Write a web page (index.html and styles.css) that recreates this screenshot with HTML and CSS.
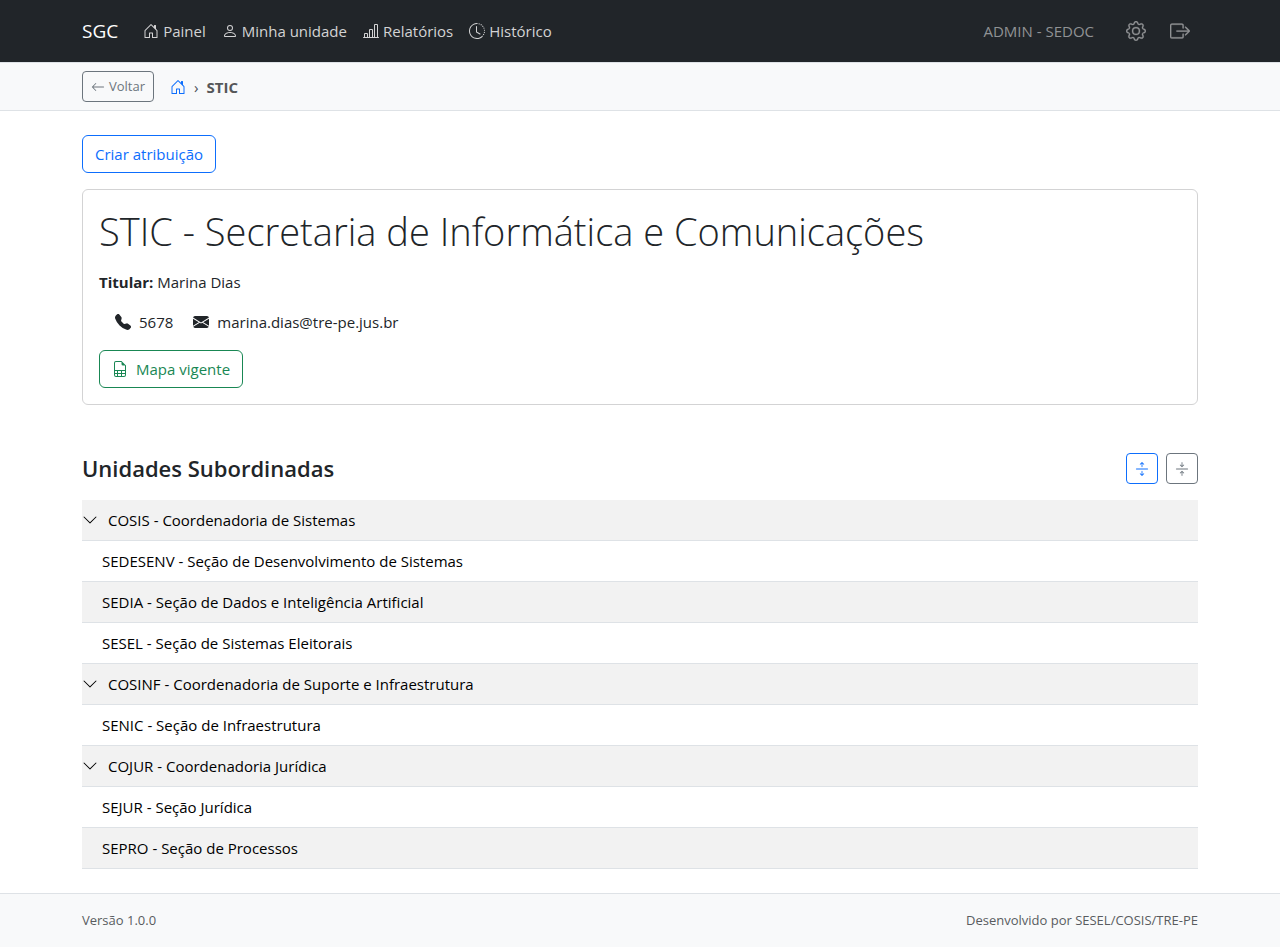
FILE: index.html
```html
<!DOCTYPE html>
<html lang="pt-BR">
<head>
<meta charset="utf-8">
<meta name="viewport" content="width=device-width, initial-scale=1">
<title>SGC - STIC</title>
<link rel="stylesheet" href="styles.css">
</head>
<body>
<svg class="sprite" aria-hidden="true">
  <symbol id="house" viewBox="0 0 16 16"><path d="M8.354 1.146a.5.5 0 0 0-.708 0l-6 6A.5.5 0 0 0 1.5 7.5v7a.5.5 0 0 0 .5.5h4.5a.5.5 0 0 0 .5-.5v-4h2v4a.5.5 0 0 0 .5.5H14a.5.5 0 0 0 .5-.5v-7a.5.5 0 0 0-.146-.354L13 5.793V2.5a.5.5 0 0 0-.5-.5h-1a.5.5 0 0 0-.5.5v1.293zM2.5 14V7.707l5.5-5.5 5.5 5.5V14H10v-4a.5.5 0 0 0-.5-.5h-3a.5.5 0 0 0-.5.5v4z"/></symbol>
  <symbol id="person" viewBox="0 0 16 16"><path d="M8 8a3 3 0 1 0 0-6 3 3 0 0 0 0 6m2-3a2 2 0 1 1-4 0 2 2 0 0 1 4 0m4 8c0 1-1 1-1 1H3s-1 0-1-1 1-4 6-4 6 3 6 4m-1-.004c-.001-.246-.154-.986-.832-1.664C11.516 10.68 10.289 10 8 10s-3.516.68-4.168 1.332c-.678.678-.83 1.418-.832 1.664z"/></symbol>
  <symbol id="chart" viewBox="0 0 16 16"><path d="M11 2a1 1 0 0 1 1-1h2a1 1 0 0 1 1 1v12h.5a.5.5 0 0 1 0 1H.5a.5.5 0 0 1 0-1H1v-3a1 1 0 0 1 1-1h2a1 1 0 0 1 1 1v3h1V7a1 1 0 0 1 1-1h2a1 1 0 0 1 1 1v7h1zm1 12h2V2h-2zm-3 0V7H7v7zm-5 0v-3H2v3z"/></symbol>
  <symbol id="history" viewBox="0 0 16 16"><path d="M8.515 1.019A7 7 0 0 0 8 1V0a8 8 0 0 1 .589.022zm2.004.45a7 7 0 0 0-.985-.299l.219-.976q.576.129 1.126.342zm1.37.71a7 7 0 0 0-.439-.27l.493-.87a8 8 0 0 1 .979.654l-.615.789a7 7 0 0 0-.418-.302zm1.834 1.79a7 7 0 0 0-.653-.796l.724-.69q.406.429.747.91zm.744 1.352a7 7 0 0 0-.214-.468l.893-.45a8 8 0 0 1 .45 1.088l-.95.313a7 7 0 0 0-.179-.483m.53 2.507a7 7 0 0 0-.1-1.025l.985-.17q.1.58.116 1.17zm-.131 1.538q.05-.254.081-.51l.993.123a8 8 0 0 1-.23 1.155l-.964-.267q.069-.247.12-.501m-.952 2.379q.276-.436.486-.908l.914.405q-.24.54-.555 1.038zm-.964 1.205q.183-.183.35-.378l.758.653a8 8 0 0 1-.401.432z"/><path d="M8 1a7 7 0 1 0 4.95 11.95l.707.707A8.001 8.001 0 1 1 8 0z"/><path d="M7.5 3a.5.5 0 0 1 .5.5v5.21l3.248 1.856a.5.5 0 0 1-.496.868l-3.5-2A.5.5 0 0 1 7 9V3.5a.5.5 0 0 1 .5-.5"/></symbol>
  <symbol id="gear" viewBox="0 0 16 16"><path d="M8 4.754a3.246 3.246 0 1 0 0 6.492 3.246 3.246 0 0 0 0-6.492M5.754 8a2.246 2.246 0 1 1 4.492 0 2.246 2.246 0 0 1-4.492 0"/><path d="M9.796 1.343c-.527-1.79-3.065-1.79-3.592 0l-.094.319a.873.873 0 0 1-1.255.52l-.292-.16c-1.64-.892-3.433.902-2.54 2.541l.159.292a.873.873 0 0 1-.52 1.255l-.319.094c-1.79.527-1.79 3.065 0 3.592l.319.094a.873.873 0 0 1 .52 1.255l-.16.292c-.892 1.64.901 3.434 2.541 2.54l.292-.159a.873.873 0 0 1 1.255.52l.094.319c.527 1.79 3.065 1.79 3.592 0l.094-.319a.873.873 0 0 1 1.255-.52l.292.16c1.64.893 3.434-.902 2.54-2.541l-.159-.292a.873.873 0 0 1 .52-1.255l.319-.094c1.79-.527 1.79-3.065 0-3.592l-.319-.094a.873.873 0 0 1-.52-1.255l.16-.292c.893-1.64-.902-3.433-2.541-2.54l-.292.159a.873.873 0 0 1-1.255-.52zm-2.633.283c.246-.835 1.428-.835 1.674 0l.094.319a1.873 1.873 0 0 0 2.693 1.115l.291-.16c.764-.415 1.6.42 1.184 1.185l-.159.292a1.873 1.873 0 0 0 1.116 2.692l.318.094c.835.246.835 1.428 0 1.674l-.319.094a1.873 1.873 0 0 0-1.115 2.693l.16.291c.415.764-.42 1.6-1.185 1.184l-.291-.159a1.873 1.873 0 0 0-2.693 1.116l-.094.318c-.246.835-1.428.835-1.674 0l-.094-.319a1.873 1.873 0 0 0-2.692-1.115l-.292.16c-.764.415-1.6-.42-1.184-1.185l.159-.291A1.873 1.873 0 0 0 1.945 8.93l-.319-.094c-.835-.246-.835-1.428 0-1.674l.319-.094A1.873 1.873 0 0 0 3.06 4.377l-.16-.292c-.415-.764.42-1.6 1.185-1.184l.292.159a1.873 1.873 0 0 0 2.692-1.115z"/></symbol>
  <symbol id="exit" viewBox="0 0 16 16"><path fill-rule="evenodd" d="M10 12.5a.5.5 0 0 1-.5.5h-8a.5.5 0 0 1-.5-.5v-9a.5.5 0 0 1 .5-.5h8a.5.5 0 0 1 .5.5v2a.5.5 0 0 0 1 0v-2A1.5 1.5 0 0 0 9.5 2h-8A1.5 1.5 0 0 0 0 3.5v9A1.5 1.5 0 0 0 1.5 14h8a1.5 1.5 0 0 0 1.5-1.5v-2a.5.5 0 0 0-1 0z"/><path fill-rule="evenodd" d="M15.854 8.354a.5.5 0 0 0 0-.708l-3-3a.5.5 0 0 0-.708.708L14.293 7.5H5.5a.5.5 0 0 0 0 1h8.793l-2.147 2.146a.5.5 0 0 0 .708.708z"/></symbol>
  <symbol id="back" viewBox="0 0 16 16"><path fill-rule="evenodd" d="M15 8a.5.5 0 0 0-.5-.5H2.707l3.147-3.146a.5.5 0 1 0-.708-.708l-4 4a.5.5 0 0 0 0 .708l4 4a.5.5 0 0 0 .708-.708L2.707 8.5H14.5A.5.5 0 0 0 15 8"/></symbol>
  <symbol id="phone" viewBox="0 0 16 16"><path fill-rule="evenodd" d="M1.885.511a1.745 1.745 0 0 1 2.61.163L6.29 2.98c.329.423.445.974.315 1.494l-.547 2.19a.68.68 0 0 0 .178.643l2.457 2.457a.68.68 0 0 0 .644.178l2.189-.547a1.75 1.75 0 0 1 1.494.315l2.306 1.794c.829.645.905 1.87.163 2.611l-1.034 1.034c-.74.74-1.846 1.065-2.877.702a18.6 18.6 0 0 1-7.01-4.42 18.6 18.6 0 0 1-4.42-7.009c-.362-1.03-.037-2.137.703-2.877z"/></symbol>
  <symbol id="mail" viewBox="0 0 16 16"><path d="M.05 3.555A2 2 0 0 1 2 2h12a2 2 0 0 1 1.95 1.555L8 8.414zM0 4.697v7.104l5.803-3.558zM6.761 8.83l-6.57 4.027A2 2 0 0 0 2 14h12a2 2 0 0 0 1.808-1.144l-6.57-4.027L8 9.586zm3.436-.586L16 11.801V4.697z"/></symbol>
  <symbol id="sheet" viewBox="0 0 16 16"><path d="M14 14V4.500L9.500 0H4a2 2 0 0 0-2 2v12a2 2 0 0 0 2 2h8a2 2 0 0 0 2-2M9.500 3A1.500 1.500 0 0 0 11 4.500h2V9H3V2a1 1 0 0 1 1-1h5.500zM3 12v-2h2v2zm0 1h2v2H4a1 1 0 0 1-1-1zm3 2v-2h3v2zm4 0v-2h3v1a1 1 0 0 1-1 1zm3-3h-3v-2h3zm-7 0v-2h3v2z"/></symbol>
  <symbol id="expand" viewBox="0 0 16 16"><path fill-rule="evenodd" d="M1 8a.5.5 0 0 1 .5-.5h13a.5.5 0 0 1 0 1h-13A.5.5 0 0 1 1 8M7.646.146a.5.5 0 0 1 .708 0l2 2a.5.5 0 0 1-.708.708L8.500 1.707V5.500a.5.5 0 0 1-1 0V1.707L6.354 2.854a.5.5 0 1 1-.708-.708zM8 10a.5.5 0 0 1 .5.5v3.793l1.146-1.147a.5.5 0 0 1 .708.708l-2 2a.5.5 0 0 1-.708 0l-2-2a.5.5 0 0 1 .708-.708L7.500 14.293V10.500A.5.5 0 0 1 8 10"/></symbol>
  <symbol id="collapse" viewBox="0 0 16 16"><path fill-rule="evenodd" d="M1 8a.5.5 0 0 1 .5-.5h13a.5.5 0 0 1 0 1h-13A.5.5 0 0 1 1 8m7-8a.5.5 0 0 1 .5.5v3.793l1.146-1.147a.5.5 0 0 1 .708.708l-2 2a.5.5 0 0 1-.708 0l-2-2a.5.5 0 1 1 .708-.708L7.500 4.293V.5A.5.5 0 0 1 8 0m-.5 11.707-1.146 1.147a.5.5 0 0 1-.708-.708l2-2a.5.5 0 0 1 .708 0l2 2a.5.5 0 0 1-.708.708L8.500 11.707V15.500a.5.5 0 0 1-1 0z"/></symbol>
  <symbol id="chevron" viewBox="0 0 16 16"><path fill-rule="evenodd" d="M1.646 4.646a.5.5 0 0 1 .708 0L8 10.293l5.646-5.647a.5.5 0 0 1 .708.708l-6 6a.5.5 0 0 1-.708 0l-6-6a.5.5 0 0 1 0-.708"/></symbol>
</svg>

<header class="navbar">
  <div class="container navbar-row">
    <a class="brand" href="#">SGC</a>
    <nav class="nav" aria-label="Principal">
      <a class="nav-link" href="#"><svg class="icon"><use href="#house"/></svg>Painel</a>
      <a class="nav-link" href="#"><svg class="icon"><use href="#person"/></svg>Minha unidade</a>
      <a class="nav-link" href="#"><svg class="icon"><use href="#chart"/></svg>Relatórios</a>
      <a class="nav-link" href="#"><svg class="icon"><use href="#history"/></svg>Histórico</a>
    </nav>
    <div class="account">
      <span class="profile">ADMIN - SEDOC</span>
      <a class="account-link" href="#" aria-label="Configurações"><svg class="icon icon-large"><use href="#gear"/></svg></a>
      <a class="account-link" href="#" aria-label="Sair"><svg class="icon icon-large"><use href="#exit"/></svg></a>
    </div>
  </div>
</header>

<div class="subbar">
  <div class="container subbar-row">
    <button class="btn btn-small btn-secondary" type="button"><svg class="icon icon-small"><use href="#back"/></svg>Voltar</button>
    <nav class="breadcrumb" aria-label="Trilha">
      <a class="home-link" href="#" aria-label="Painel"><svg class="icon"><use href="#house"/></svg></a>
      <span class="separator">›</span>
      <span class="current" aria-current="page">STIC</span>
    </nav>
  </div>
</div>

<main class="container main">
  <button class="btn btn-primary" type="button">Criar atribuição</button>

  <section class="card">
    <h1 class="title">STIC - Secretaria de Informática e Comunicações</h1>
    <p class="holder"><strong>Titular:</strong> Marina Dias</p>
    <p class="contacts">
      <span class="contact"><svg class="icon"><use href="#phone"/></svg>5678</span>
      <span class="contact"><svg class="icon"><use href="#mail"/></svg>marina.dias@tre-pe.jus.br</span>
    </p>
    <button class="btn btn-success" type="button"><svg class="icon"><use href="#sheet"/></svg>Mapa vigente</button>
  </section>

  <section class="units">
    <div class="units-header">
      <h2 class="subtitle">Unidades Subordinadas</h2>
      <div class="tools">
        <button class="btn btn-small btn-primary" type="button" aria-label="Expandir todos"><svg class="icon icon-small"><use href="#expand"/></svg></button>
        <button class="btn btn-small btn-secondary" type="button" aria-label="Recolher todos"><svg class="icon icon-small"><use href="#collapse"/></svg></button>
      </div>
    </div>
    <table class="tree" aria-label="Unidades Subordinadas">
      <tbody>
        <tr><td><div class="node"><button class="toggle" type="button" aria-label="Recolher COSIS"><svg class="icon"><use href="#chevron"/></svg></button>COSIS - Coordenadoria de Sistemas</div></td></tr>
        <tr><td><div class="node leaf">SEDESENV - Seção de Desenvolvimento de Sistemas</div></td></tr>
        <tr><td><div class="node leaf">SEDIA - Seção de Dados e Inteligência Artificial</div></td></tr>
        <tr><td><div class="node leaf">SESEL - Seção de Sistemas Eleitorais</div></td></tr>
        <tr><td><div class="node"><button class="toggle" type="button" aria-label="Recolher COSINF"><svg class="icon"><use href="#chevron"/></svg></button>COSINF - Coordenadoria de Suporte e Infraestrutura</div></td></tr>
        <tr><td><div class="node leaf">SENIC - Seção de Infraestrutura</div></td></tr>
        <tr><td><div class="node"><button class="toggle" type="button" aria-label="Recolher COJUR"><svg class="icon"><use href="#chevron"/></svg></button>COJUR - Coordenadoria Jurídica</div></td></tr>
        <tr><td><div class="node leaf">SEJUR - Seção Jurídica</div></td></tr>
        <tr><td><div class="node leaf">SEPRO - Seção de Processos</div></td></tr>
      </tbody>
    </table>
  </section>
</main>

<footer class="footer">
  <div class="container footer-row">
    <span>Versão 1.0.0</span>
    <span>Desenvolvido por SESEL/COSIS/TRE-PE</span>
  </div>
</footer>
</body>
</html>
```
FILE: styles.css
```css
* { box-sizing: border-box; }

body {
  margin: 0;
  min-height: 100vh;
  display: flex;
  flex-direction: column;
  background: #fff;
  color: #212529;
  font-family: "Segoe UI", "Open Sans", "Noto Sans", sans-serif;
  font-size: 15px;
  line-height: 24px;
}

h1, h2, p { margin: 0; }
a { text-decoration: none; }

.sprite { display: none; }

.container {
  width: 100%;
  max-width: 1140px;
  margin: 0 auto;
  padding: 0 12px;
}

.icon {
  width: 16px;
  height: 16px;
  flex: none;
  fill: currentColor;
}
.icon-small { width: 14px; height: 14px; }
.icon-large {
  width: 20px;
  height: 20px;
  stroke: currentColor;
  stroke-width: 0.2;
}

.navbar { background: #212529; }
.navbar-row {
  display: flex;
  align-items: center;
  min-height: 62px;
}
.brand {
  margin-right: 17px;
  color: #fff;
  font-size: 19px;
}
.nav { display: flex; }
.nav-link {
  display: flex;
  align-items: center;
  gap: 4px;
  padding: 8px;
  color: #d3d3d4;
}
.account {
  display: flex;
  align-items: center;
  gap: 24px;
  margin-left: auto;
  padding-right: 8px;
  color: #909294;
}
.profile { margin-right: 8px; }
.account-link { display: flex; color: inherit; }

.subbar {
  background: #f8f9fa;
  border-top: 1px solid #dee2e6;
  border-bottom: 1px solid #dee2e6;
}
.subbar-row {
  display: flex;
  align-items: center;
  gap: 16px;
  padding-top: 8px;
  padding-bottom: 8px;
}

.btn {
  display: inline-flex;
  align-items: center;
  gap: 8px;
  padding: 6px 12px;
  border: 1px solid currentColor;
  border-radius: 6px;
  background: transparent;
  font: inherit;
  cursor: pointer;
}
.btn-small {
  gap: 4px;
  padding: 4px 8px;
  border-radius: 4px;
  font-size: 13px;
  line-height: 21px;
  min-height: 31px;
}
.btn-primary { color: #0d6efd; }
.btn-secondary { color: #6c757d; }
.btn-success { color: #198754; }

.breadcrumb {
  display: flex;
  align-items: center;
  gap: 8px;
}
.home-link { display: flex; color: #0d6efd; }
.separator { color: #495057; }
.current { color: #555759; font-weight: 700; }

.main { padding-top: 24px; padding-bottom: 24px; }

.card {
  margin-top: 16px;
  padding: 16px;
  border: 1px solid #d3d3d4;
  border-radius: 6px;
}
.title {
  margin-bottom: 14px;
  font-size: 38px;
  font-weight: 300;
  line-height: 50px;
}
.holder { margin-bottom: 16px; }
.contacts {
  display: flex;
  gap: 20px;
  margin-bottom: 16px;
  padding-left: 16px;
}
.contact {
  display: flex;
  align-items: center;
  gap: 8px;
}

.units { margin-top: 48px; }
.units-header {
  display: flex;
  align-items: center;
  justify-content: space-between;
  margin-bottom: 16px;
}
.subtitle {
  font-size: 22px;
  font-weight: 600;
  line-height: 31px;
}
.tools { display: flex; gap: 8px; }

.tree {
  width: 100%;
  border-collapse: separate;
  border-spacing: 0;
  color: #000;
}
.tree td {
  padding: 8px 0;
  border-bottom: 1px solid #dee2e6;
}
.tree tr:nth-child(odd) td { background: #f2f2f2; }
.node {
  display: flex;
  align-items: center;
  gap: 10px;
}
.leaf { padding-left: 20px; }
.toggle {
  display: flex;
  padding: 0;
  border: 0;
  background: none;
  color: inherit;
  cursor: pointer;
}

.footer {
  margin-top: auto;
  background: #f8f9fa;
  border-top: 1px solid #dee2e6;
  color: #595c5f;
  font-size: 13px;
  line-height: 21px;
}
.footer-row {
  display: flex;
  justify-content: space-between;
  padding-top: 16px;
  padding-bottom: 16px;
}
```
